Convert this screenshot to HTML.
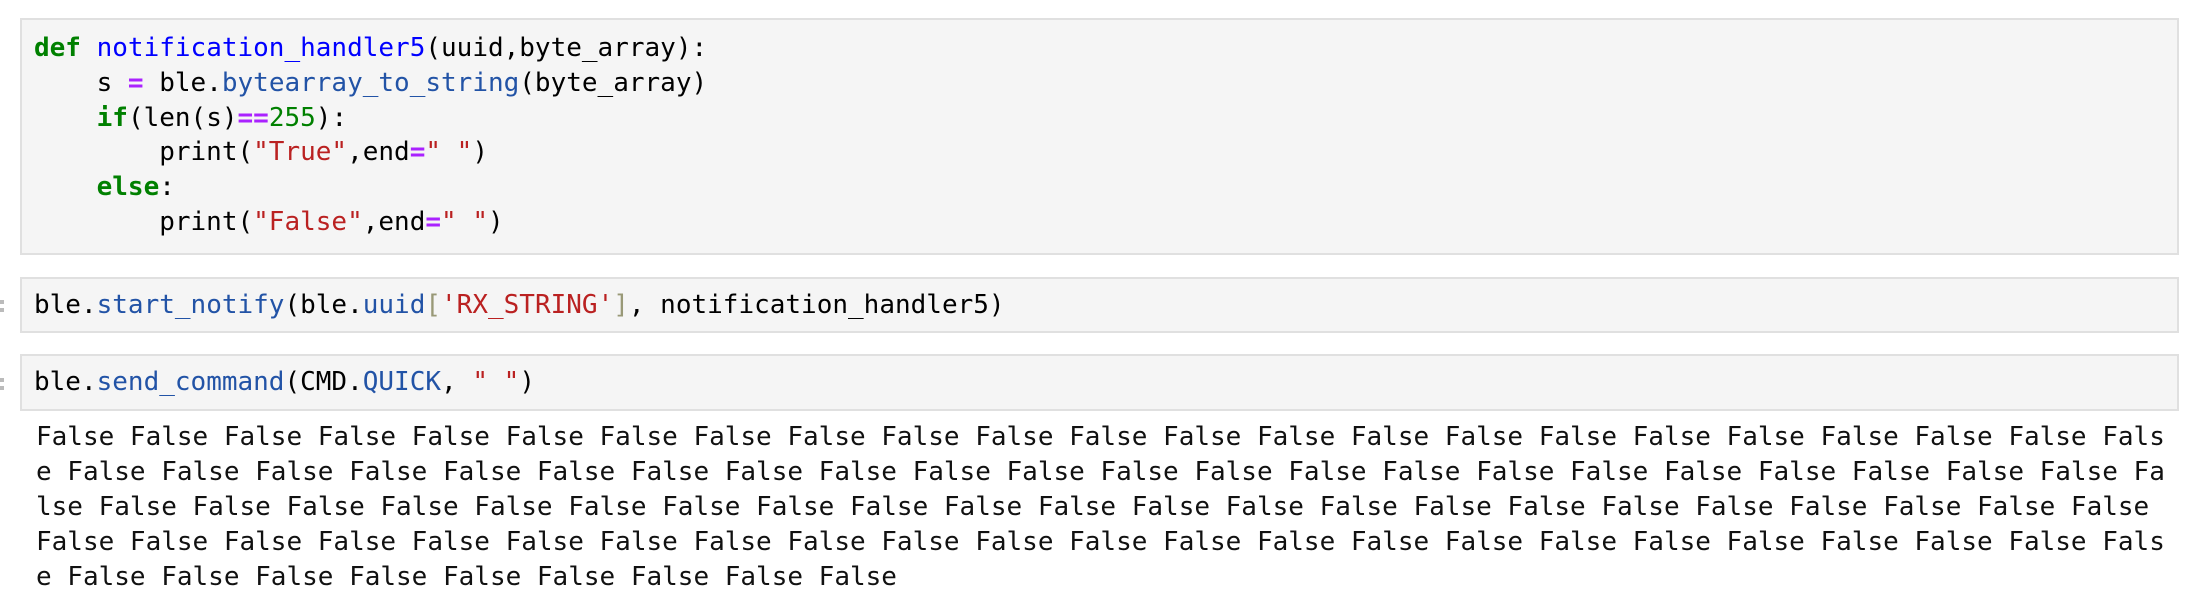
<!DOCTYPE html>
<html><head><meta charset="utf-8"><style>
html,body{margin:0;padding:0;background:#fff;width:2200px;height:608px;overflow:hidden;}
.box{position:absolute;left:20px;width:2155px;background:#f5f5f5;border:2px solid #e0e0e0;box-sizing:content-box;}
pre{margin:0;font-family:"DejaVu Sans Mono","Liberation Mono",monospace;color:#000;}
.code{font-size:26px;line-height:36.4px;padding:8px 0 8px 12px;}
.c1{line-height:34.8px;padding-top:11px;}
.k{color:#008000;font-weight:bold}
.f{color:#0000ff}
.o{color:#aa22ff;font-weight:bold}
.m{color:#2253a6}
.s{color:#ba2121}
.n{color:#008000}
.b{color:#999977}
.out{position:absolute;left:36px;top:420px;font-size:26px;line-height:35px;color:#111;white-space:pre;}
.pr{position:absolute;left:0;width:4px;height:4px;background:#bbb;}
</style></head><body>
<div class="box" style="top:18px;height:233px;"><pre class="code c1"><span class="k">def</span> <span class="f">notification_handler5</span>(uuid,byte_array):
    s <span class="o">=</span> ble<span>.</span><span class="m">bytearray_to_string</span>(byte_array)
    <span class="k">if</span>(len(s)<span class="o">==</span><span class="n">255</span>):
        print(<span class="s">"True"</span>,end<span class="o">=</span><span class="s">" "</span>)
    <span class="k">else</span>:
        print(<span class="s">"False"</span>,end<span class="o">=</span><span class="s">" "</span>)</pre></div>
<div class="pr" style="top:300px"></div><div class="pr" style="top:308px"></div>
<div class="box" style="top:277px;height:52px;"><pre class="code">ble.<span class="m">start_notify</span>(ble.<span class="m">uuid</span><span class="b">[</span><span class="s">'RX_STRING'</span><span class="b">]</span>, notification_handler5)</pre></div>
<div class="pr" style="top:378px"></div><div class="pr" style="top:386px"></div>
<div class="box" style="top:354px;height:53px;"><pre class="code">ble.<span class="m">send_command</span>(CMD.<span class="m">QUICK</span>, <span class="s">" "</span>)</pre></div>
<pre class="out">False False False False False False False False False False False False False False False False False False False False False False Fals
e False False False False False False False False False False False False False False False False False False False False False False Fa
lse False False False False False False False False False False False False False False False False False False False False False False 
False False False False False False False False False False False False False False False False False False False False False False Fals
e False False False False False False False False False</pre>
</body></html>
